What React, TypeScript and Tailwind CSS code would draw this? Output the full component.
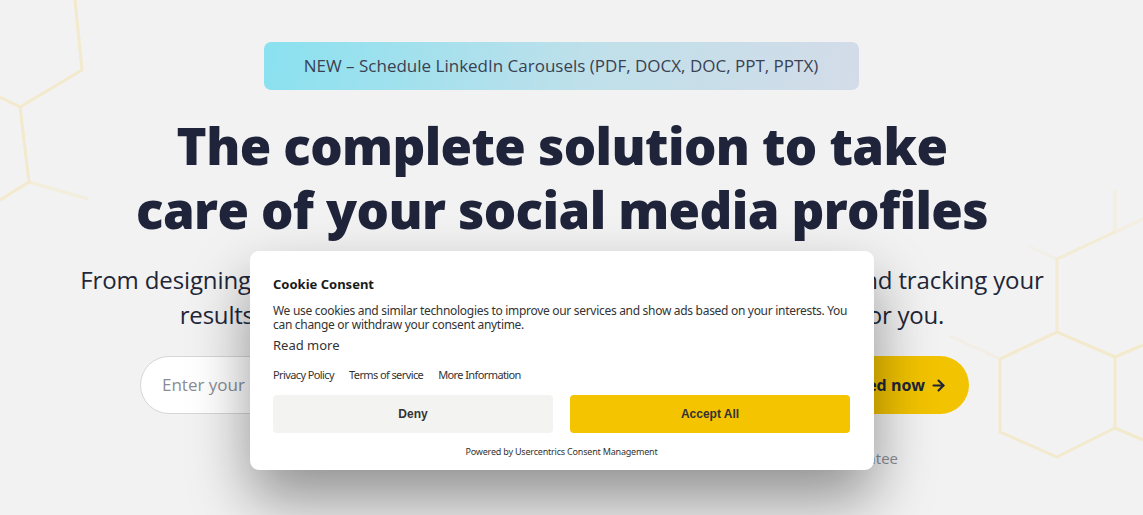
import { ArrowRight } from 'lucide-react';

const hexLines: { d: string; o: number }[] = [
  // top-left honeycomb
  { d: 'M75 0 L82 70 L20 107 L0 97', o: 1 },
  { d: 'M20 107 L29 182 L0 200', o: 1 },
  { d: 'M29 182 L88 199', o: 0.6 },
  // right honeycomb
  { d: 'M1115 190 L1115 232 L1143 219', o: 0.5 },
  { d: 'M1115 232 L1057 259 L1057 332', o: 0.8 },
  { d: 'M1057 259 L1030 247', o: 0.3 },
  { d: 'M1057 332 L1115 357 L1115 428 L1057 457 L1000 432 L1000 359 L1057 332', o: 1 },
  { d: 'M1000 359 L950 336', o: 0.35 },
  { d: 'M1115 357 L1143 345', o: 1 },
  { d: 'M1115 428 L1143 440', o: 1 },
];

function Honeycomb() {
  return (
    <svg className="absolute inset-0 h-full w-full" viewBox="0 0 1143 515" fill="none">
      {hexLines.map((l, i) => (
        <path
          key={i}
          d={l.d}
          stroke="#f3e9cc"
          strokeWidth={3}
          strokeLinejoin="round"
          opacity={l.o}
        />
      ))}
    </svg>
  );
}

function CookieModal() {
  return (
    <div
      className="absolute left-[250px] top-[251px] w-[624px] rounded-[9px] bg-white pl-[23px] pr-[24px] pt-[25px] pb-[12px] text-[#333] shadow-[0_30px_60px_rgba(0,0,0,0.4)]"
      style={{ fontFamily: '"Noto Sans", "Open Sans", sans-serif' }}
    >
      <h2 className="text-[13px] font-bold leading-[16px] text-[#1a1a1a]">Cookie Consent</h2>
      <p className="mt-[12px] text-[12px] leading-[14px] tracking-[-0.3px]">
        We use cookies and similar technologies to improve our services and show ads based on your interests. You
        can change or withdraw your consent anytime.
      </p>
      <p className="mt-[5px] text-[13px] leading-[16px]">Read more</p>
      <div className="mt-[15px] flex gap-[15px] text-[11px] leading-[14px] tracking-[-0.6px]">
        <span>Privacy Policy</span>
        <span>Terms of service</span>
        <span>More Information</span>
      </div>
      <div className="mt-[13px] flex gap-[17px]" style={{ fontFamily: '"Liberation Sans", Arial, sans-serif' }}>
        <button className="flex h-[38px] flex-1 items-center justify-center rounded-[4px] bg-[#f3f3f2] text-[12px] font-bold text-[#333]">
          Deny
        </button>
        <button className="flex h-[38px] flex-1 items-center justify-center rounded-[4px] bg-[#f5c400] text-[12px] font-bold text-[#333]">
          Accept All
        </button>
      </div>
      <p className="mt-[13px] text-center text-[9px] leading-[12px] tracking-[-0.2px]">
        Powered by Usercentrics Consent Management
      </p>
    </div>
  );
}

export default function App() {
  return (
    <div
      className="relative h-[515px] w-full overflow-hidden bg-[#f2f2f2]"
      style={{ fontFamily: '"Open Sans", sans-serif' }}
    >
      <Honeycomb />

      <div className="relative flex w-[1124px] flex-col items-center pt-[42px]">
        {/* Announcement */}
        <div className="-ml-[2px] flex h-[48px] w-[595px] items-center justify-center rounded-[7px] bg-[linear-gradient(100deg,#8ae1f0,#bfe0ea_55%,#d3dce8)] text-[17px] text-[#3b4153]">
          NEW – Schedule LinkedIn Carousels (PDF, DOCX, DOC, PPT, PPTX)
        </div>

        {/* Hero */}
        <h1 className="mt-[23px] text-center text-[51px] font-extrabold leading-[64px] tracking-[-0.6px] text-[#20243a]">
          The complete solution to take
          <br />
          care of your social media profiles
        </h1>

        <p className="mt-[21px] text-center text-[24px] leading-[35px] tracking-[-0.12px] text-[#222638]">
          From designing and scheduling posts to engaging with your followers and tracking your
          <br />
          <span className="tracking-[-0.2px]">
            results, our all-in-one social media platform takes care of it all for you.
          </span>
        </p>

        {/* Signup form */}
        <div className="ml-[140px] mt-[24px] flex w-[829px] gap-[10px] self-start">
          <div className="flex h-[58px] flex-1 items-center rounded-full border border-[#d6d6d6] bg-white pl-[21px] text-[17px] text-[#8a8d96]">
            Enter your email
          </div>
          <button className="flex h-[58px] w-[200px] items-center justify-end gap-[5px] rounded-full bg-[#f2c300] pr-[22px] text-[16px] font-bold text-[#20243a]">
            Get started now
            <ArrowRight size={17} strokeWidth={3} />
          </button>
        </div>

        <p className="mr-[226px] mt-[33px] self-end text-[15px] leading-[22px] text-[#8a8d96]">
          No credit card required • 30-day money-back guarantee
        </p>
      </div>

      <CookieModal />
    </div>
  );
}
